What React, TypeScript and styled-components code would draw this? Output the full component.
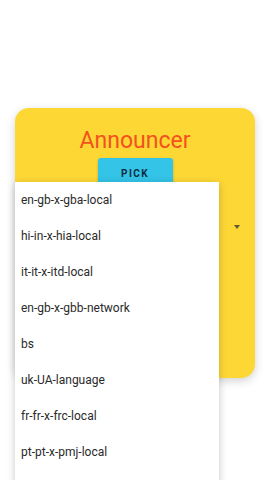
import { createGlobalStyle, styled } from 'styled-components';

const GlobalStyle = createGlobalStyle`
  html, body {
    margin: 0;
    padding: 0;
    background: #ffffff;
    font-family: Roboto, "Noto Sans", sans-serif;
  }
`;

const voices = [
  'en-gb-x-gba-local',
  'hi-in-x-hia-local',
  'it-it-x-itd-local',
  'en-gb-x-gbb-network',
  'bs',
  'uk-UA-language',
  'fr-fr-x-frc-local',
  'pt-pt-x-pmj-local',
];

const App = () => {
  return (
    <Page>
      <GlobalStyle />
      <Card>
        <Title>Announcer</Title>
        <PickButton>PICK</PickButton>
        <SelectRow>
          <Arrow />
        </SelectRow>
      </Card>
      <Menu>
        {voices.map((v) => (
          <MenuItem key={v}>{v}</MenuItem>
        ))}
      </Menu>
    </Page>
  );
};

export default App;

const Page = styled.div`
  position: relative;
  width: 270px;
  height: 480px;
  overflow: hidden;
  padding-top: 108px;
  box-sizing: border-box;
`;

const Card = styled.div`
  margin: 0 15px;
  height: 270px;
  background: #fdd835;
  border-radius: 14px;
  box-shadow: 0 3px 10px rgba(0, 0, 0, 0.18);
  display: flex;
  flex-direction: column;
  align-items: center;
  padding-top: 19px;
  box-sizing: border-box;
`;

const Title = styled.div`
  font-size: 23px;
  line-height: 28px;
  color: #f4511e;
`;

const PickButton = styled.div`
  margin-top: 3px;
  width: 75px;
  height: 30px;
  background: #33c4e8;
  border-radius: 3px;
  box-shadow: 0 1px 3px rgba(0, 0, 0, 0.2);
  display: flex;
  align-items: center;
  justify-content: center;
  font-size: 10px;
  font-weight: 700;
  letter-spacing: 1.4px;
  color: #0e2a40;
`;

const SelectRow = styled.div`
  align-self: stretch;
  display: flex;
  justify-content: flex-end;
  padding: 37px 15px 0 0;
`;

const Arrow = styled.div`
  width: 0;
  height: 0;
  border-left: 3.5px solid transparent;
  border-right: 3.5px solid transparent;
  border-top: 4px solid #5d5a3a;
`;

const Menu = styled.div`
  position: absolute;
  left: 15px;
  top: 182px;
  bottom: -12px;
  width: 204px;
  background: #ffffff;
  box-shadow: 0 2px 8px rgba(0, 0, 0, 0.22);
`;

const MenuItem = styled.div`
  height: 36px;
  display: flex;
  align-items: center;
  padding-left: 6px;
  font-size: 12px;
  color: #2a2a2a;
`;
